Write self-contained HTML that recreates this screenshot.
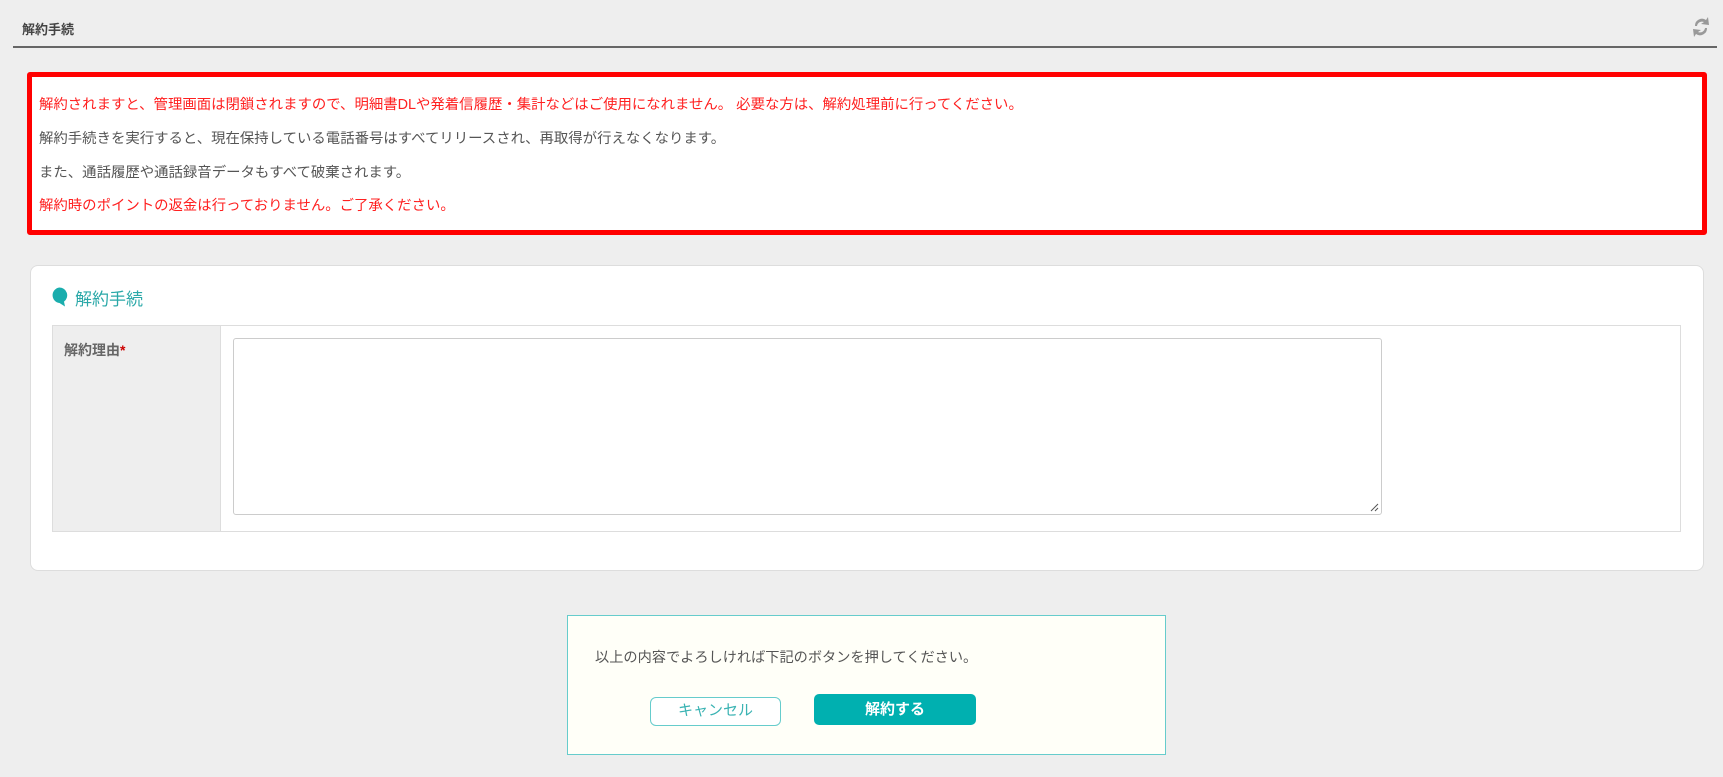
<!DOCTYPE html>
<html><head><meta charset="utf-8"><style>
*{box-sizing:border-box;margin:0;padding:0}
body{width:1723px;height:777px;background:#eeeeee;font-family:"Liberation Sans","Noto Sans CJK JP",sans-serif;position:relative;overflow:hidden;color:#555}
.abs{position:absolute}
.title{left:22px;top:19px;font-size:13px;font-weight:bold;color:#444}
.line{left:13px;top:46px;width:1704px;height:2px;background:#666}
.red{left:27px;top:72px;width:1680px;height:163px;border:5px solid #ff0000;border-radius:3px;background:#fff}
.red p{position:absolute;left:7px;font-size:14.4px;white-space:nowrap}
.card{left:30px;top:265px;width:1674px;height:306px;background:#fff;border:1px solid #ddd;border-radius:8px}
.table{left:52px;top:325px;width:1629px;height:207px;border:1px solid #ddd;background:#fff}
.lab{left:0;top:0;width:168px;height:205px;background:#eee;border-right:1px solid #ddd}
.ta{left:180px;top:12px;width:1149px;height:177px;border:1px solid #ccc;border-radius:3px;background:#fff}
.box{left:567px;top:615px;width:599px;height:140px;background:#fffff8;border:1px solid #6cc}
.btn{font-size:15px;text-align:center;border-radius:5px}
</style></head><body>
<div class="abs title">解約手続</div>
<svg class="abs" style="left:1689px;top:14px" width="24" height="26" viewBox="0 0 24 26">
<path d="M6 12 A7 7 0 0 1 17 6 L19 3 L20 11 L12 10 L15 8 A5 5 0 0 0 8 12 Z" fill="#999"/>
<path d="M18 14 A7 7 0 0 1 7 20 L5 23 L4 15 L12 16 L9 18 A5 5 0 0 0 16 14 Z" fill="#999"/>
</svg>
<div class="abs line"></div>
<div class="abs red">
<p style="top:16px;color:#ff2020">解約されますと、管理画面は閉鎖されますので、明細書DLや発着信履歴・集計などはご使用になれません。 必要な方は、解約処理前に行ってください。</p>
<p style="top:50px;color:#555">解約手続きを実行すると、現在保持している電話番号はすべてリリースされ、再取得が行えなくなります。</p>
<p style="top:84px;color:#555">また、通話履歴や通話録音データもすべて破棄されます。</p>
<p style="top:117px;color:#ff2020">解約時のポイントの返金は行っておりません。ご了承ください。</p>
</div>
<div class="abs card"></div>
<svg class="abs" style="left:51px;top:287px" width="17" height="20" viewBox="0 0 17 20"><path d="M8.5 0.5 A7.8 7.8 0 0 1 13 14.6 L14 19.5 L8.5 16 A7.8 7.8 0 0 1 8.5 0.5 Z" fill="#1aadad"/></svg>
<div class="abs" style="left:75px;top:285px;font-size:17px;color:#2aa8a8">解約手続</div>
<div class="abs table">
<div class="abs lab"><div class="abs" style="left:11px;top:14px;font-size:14px;font-weight:bold;color:#666">解約理由<span style="color:#c00">*</span></div></div>
<div class="abs ta"><svg class="abs" style="right:2px;bottom:2px" width="10" height="10"><path d="M9 2 L2 9 M9 6 L6 9" stroke="#555" stroke-width="1"/></svg></div>
</div>
<div class="abs box">
<div class="abs" style="left:27px;top:31px;font-size:14.2px;color:#555">以上の内容でよろしければ下記のボタンを押してください。</div>
<div class="abs btn" style="left:82px;top:81px;width:131px;height:29px;border:1.5px solid #6cc;background:#fff;color:#3ab3b3;line-height:26px;border-radius:6px">キャンセル</div>
<div class="abs btn" style="left:246px;top:78px;width:162px;height:31px;background:#00b0b0;color:#fff;font-weight:bold;line-height:31px">解約する</div>
</div>
</body></html>
